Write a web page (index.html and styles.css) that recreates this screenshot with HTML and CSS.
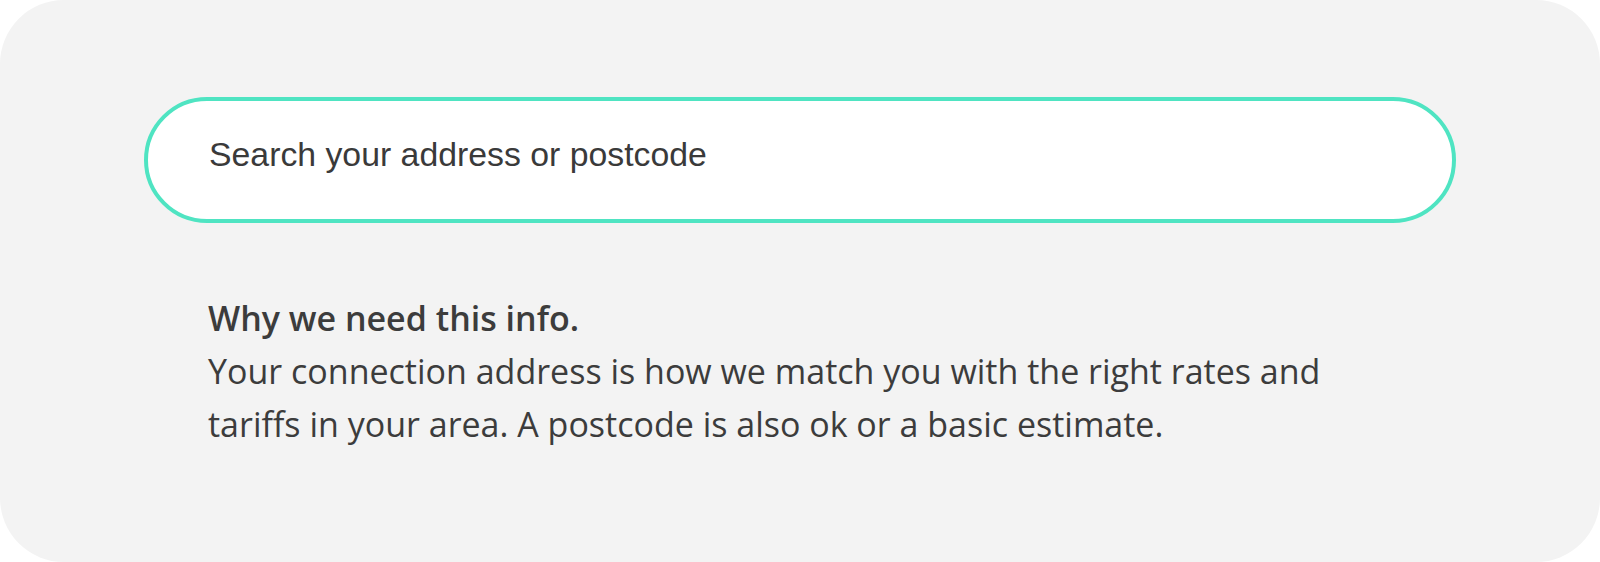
FILE: index.html
```html
<!DOCTYPE html>
<html lang="en">
<head>
<meta charset="utf-8">
<title>Address search</title>
<link rel="stylesheet" href="styles.css">
</head>
<body>
<main class="panel">
  <div class="search">
    <input class="search-input" type="text" placeholder="Search your address or postcode" aria-label="Search your address or postcode">
  </div>
  <section class="info">
    <h2 class="info-title">Why we need this info.</h2>
    <p class="info-text">Your connection address is how we match you with the right rates and<br>tariffs in your area. A postcode is also ok or a basic estimate.</p>
  </section>
</main>
</body>
</html>
```
FILE: styles.css
```css
html, body {
  margin: 0;
  padding: 0;
  background: #ffffff;
}

.panel {
  box-sizing: border-box;
  width: 1600px;
  height: 562px;
  background: #f3f3f3;
  border-radius: 64px;
  padding: 97px 144px 0 144px;
  display: flex;
  flex-direction: column;
}

.search {
  box-sizing: border-box;
  height: 126px;
  width: 1312px;
  border: 4px solid #4fe4c2;
  border-radius: 63px;
  background: #ffffff;
  display: flex;
  align-items: flex-start;
  padding: 33px 0 0 61px;
}

.search-input {
  flex: 1;
  border: none;
  outline: none;
  background: transparent;
  font-family: "Liberation Sans", Arial, sans-serif;
  font-size: 33.8px;
  color: #3a3a3a;
  padding: 0;
  margin: 0;
  height: 40px;
  line-height: 40px;
}

.search-input::placeholder {
  color: #3a3a3a;
  opacity: 1;
}

.info {
  margin: 69px 0 0 64px;
  font-family: "Open Sans", sans-serif;
  color: #3c3c3c;
  font-size: 34px;
  line-height: 53px;
}

.info-title {
  margin: 0;
  font-size: 34px;
  font-weight: 600;
  line-height: 53px;
}

.info-text {
  margin: 0;
}
```
